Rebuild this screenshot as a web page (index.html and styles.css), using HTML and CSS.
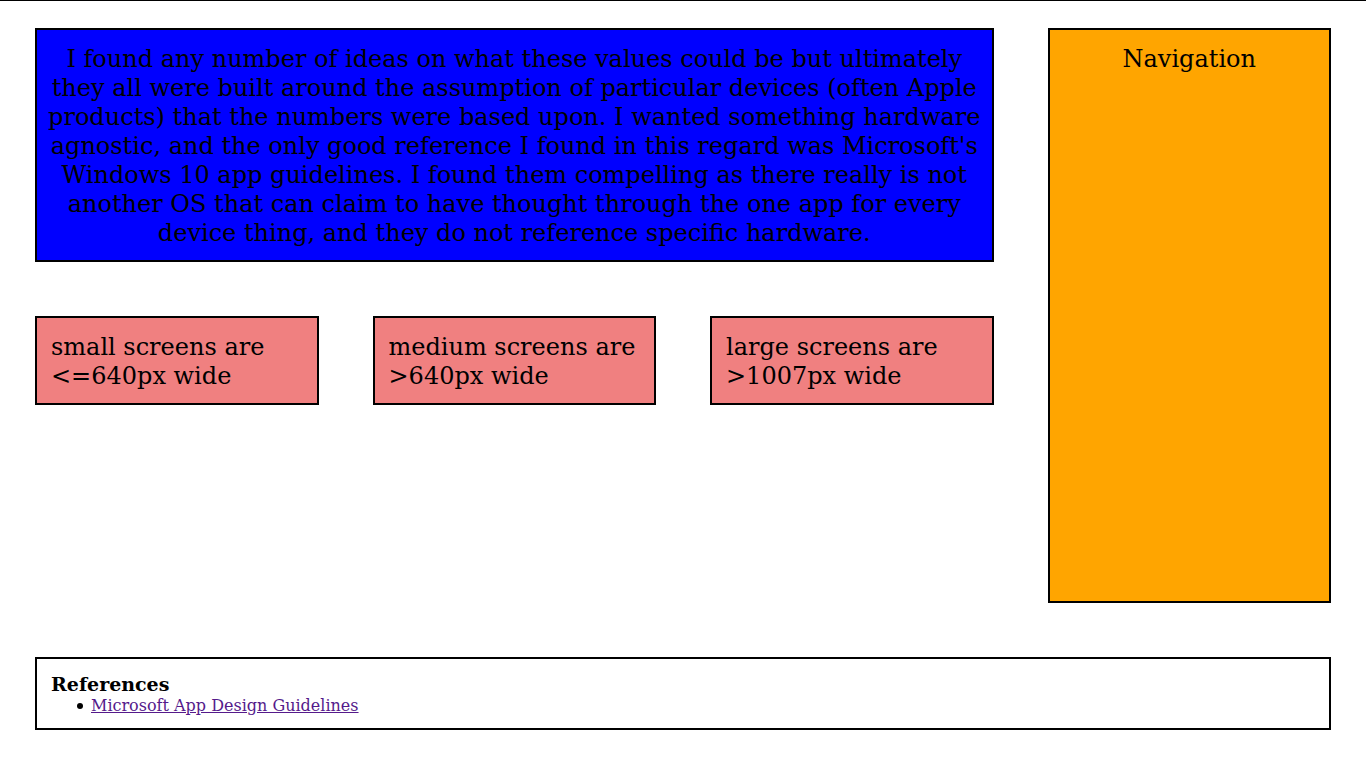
FILE: index.html
```html
<!DOCTYPE html>
<html lang="en">
<head>
<meta charset="utf-8">
<title>Responsive Layout</title>
<link rel="stylesheet" href="styles.css">
</head>
<body>
<div class="page">
  <header class="box intro">I found any number of ideas on what these values could be but ultimately they all were built around the assumption of particular devices (often Apple products) that the numbers were based upon. I wanted something hardware agnostic, and the only good reference I found in this regard was Microsoft's Windows 10 app guidelines. I found them compelling as there really is not another OS that can claim to have thought through the one app for every device thing, and they do not reference specific hardware.</header>
  <nav class="box navigation">Navigation</nav>
  <main class="sizes">
    <section class="box size">small screens are &lt;=640px wide</section>
    <section class="box size">medium screens are &gt;640px wide</section>
    <section class="box size">large screens are &gt;1007px wide</section>
  </main>
  <footer class="box references">
    <h3 class="references-title">References</h3>
    <ul class="references-list">
      <li class="references-item"><a class="references-link" href="#guidelines">Microsoft App Design Guidelines</a></li>
    </ul>
  </footer>
</div>
</body>
</html>
```
FILE: styles.css
```css
* {
  box-sizing: border-box;
}

body {
  margin: 0;
  font-family: "DejaVu Serif", serif;
  font-size: 16px;
  color: #000;
}

.page {
  display: grid;
  grid-template-columns: repeat(4, 1fr);
  grid-template-rows: auto 1fr auto;
  gap: 54px;
  min-height: 100vh;
  padding: 27px 35px 38px;
  border-top: 1px solid #000;
}

.box {
  padding: 15px 14px 12px;
  border: 2px solid #000;
}

.intro {
  grid-column: span 3;
  padding-inline: 10px;
  background: blue;
  font-size: 24px;
  line-height: 29px;
  text-align: center;
}

.navigation {
  grid-column: 4;
  grid-row: 1 / span 2;
  background: orange;
  font-size: 24px;
  line-height: 29px;
  text-align: center;
}

.sizes {
  grid-column: span 3;
  display: grid;
  grid-template-columns: repeat(3, 1fr);
  gap: 54px;
  align-items: start;
}

.size {
  background: lightcoral;
  font-size: 24px;
  line-height: 29px;
}

.references {
  grid-column: 1 / -1;
}

.references-title {
  margin: 0 0 2px;
  font-size: 19px;
  line-height: 20px;
}

.references-list {
  margin: 0;
  padding-left: 26px;
  line-height: 20px;
  list-style: none;
}

.references-item {
  display: flex;
  align-items: center;
  gap: 8px;
}

.references-item::before {
  content: "";
  width: 6px;
  height: 6px;
  border-radius: 50%;
  background: #000;
}

.references-link {
  color: #551a8b;
}
```
